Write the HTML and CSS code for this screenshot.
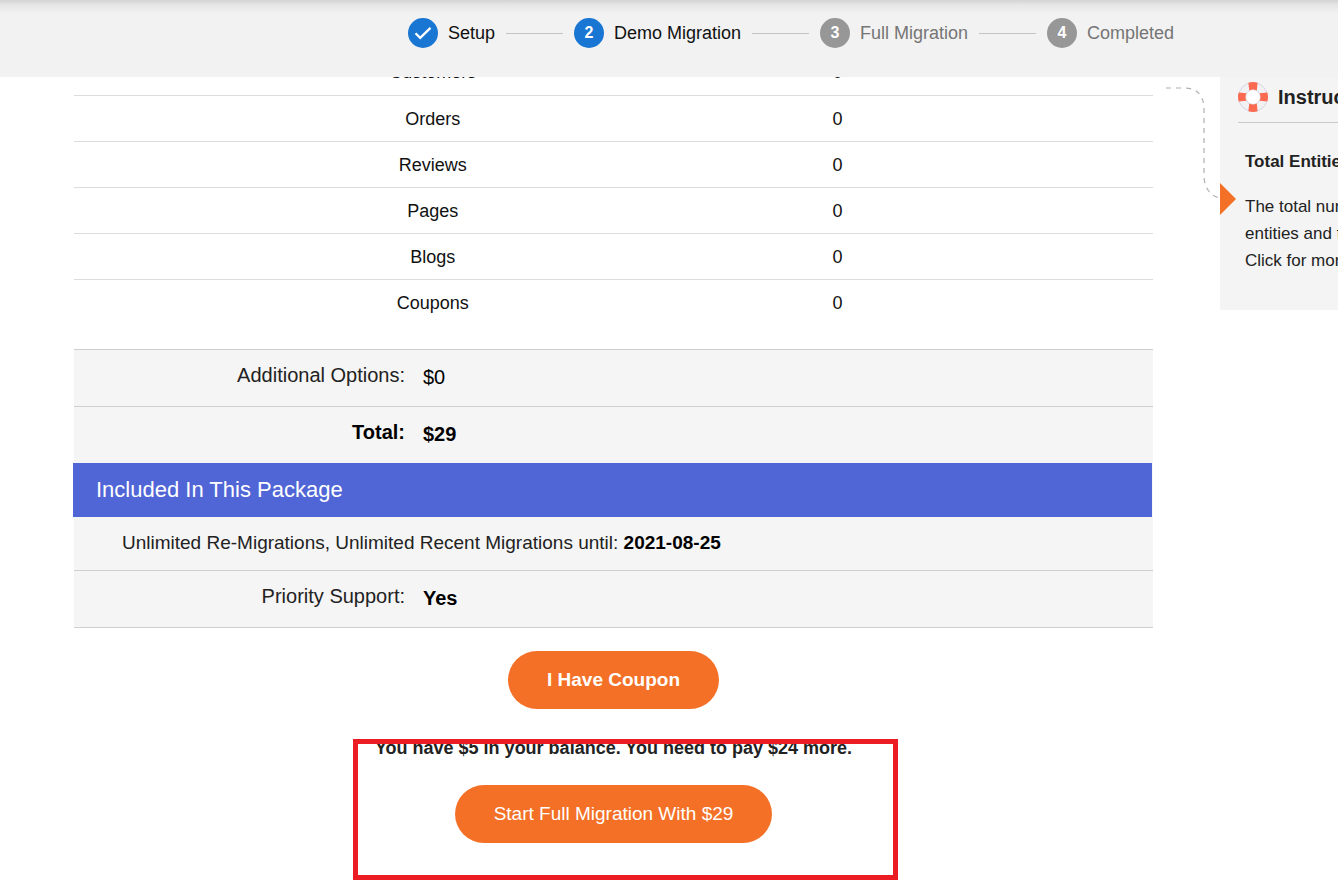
FILE: index.html
```html
<!DOCTYPE html>
<html lang="en">
<head>
<meta charset="utf-8">
<title>Demo Migration</title>
<link rel="stylesheet" href="styles.css">
</head>
<body>
<header class="topbar">
  <ol class="steps">
    <li class="step step-active">
      <span class="step-dot"><svg class="check" viewBox="0 0 18 14" aria-label="Done"><path d="M1.5 7.2 6.2 11.8 16.5 1.8" fill="none" stroke="#fff" stroke-width="2.3"/></svg></span>
      <span>Setup</span>
    </li>
    <li class="step-line"></li>
    <li class="step step-active"><span class="step-dot">2</span><span>Demo Migration</span></li>
    <li class="step-line"></li>
    <li class="step"><span class="step-dot">3</span><span>Full Migration</span></li>
    <li class="step-line"></li>
    <li class="step"><span class="step-dot">4</span><span>Completed</span></li>
  </ol>
</header>

<div class="layout">
  <main class="main">
    <table class="entities">
      <tbody>
        <tr><th scope="row">Customers</th><td>0</td></tr>
        <tr><th scope="row">Orders</th><td>0</td></tr>
        <tr><th scope="row">Reviews</th><td>0</td></tr>
        <tr><th scope="row">Pages</th><td>0</td></tr>
        <tr><th scope="row">Blogs</th><td>0</td></tr>
        <tr><th scope="row">Coupons</th><td>0</td></tr>
      </tbody>
    </table>

    <section class="summary">
      <div class="row"><span class="label">Additional Options:</span><span class="value">$0</span></div>
      <div class="row row-strong"><span class="label">Total:</span><span class="value">$29</span></div>
      <h2 class="banner">Included In This Package</h2>
      <p class="note">Unlimited Re-Migrations, Unlimited Recent Migrations until: <strong>2021-08-25</strong></p>
      <div class="row"><span class="label">Priority Support:</span><strong class="value">Yes</strong></div>
    </section>

    <div class="actions">
      <button class="btn btn-bold" type="button">I Have Coupon</button>
      <div class="payment">
        <p class="balance">You have $5 in your balance. You need to pay $24 more.</p>
        <button class="btn" type="button">Start Full Migration With $29</button>
        <div class="highlight"></div>
      </div>
    </div>
  </main>

  <aside class="sidebar">
    <svg class="connector" viewBox="0 0 72 136" aria-hidden="true">
      <path d="M2 8H20Q40 8 40 30V98Q42 115 56 118" fill="none" stroke="#b0b0b0" stroke-width="1.2" stroke-dasharray="5 5"/>
      <path d="M56 103 72 119 56 135Z" fill="#f37026"/>
    </svg>
    <h2 class="side-title">
      <svg class="buoy" viewBox="0 0 30 30" aria-hidden="true">
        <circle cx="15" cy="15" r="11" fill="none" stroke="#f2f2f5" stroke-width="7.4"/>
        <circle cx="15" cy="15" r="14.5" fill="none" stroke="#cdcdda" stroke-width=".8"/>
        <circle cx="15" cy="15" r="7.4" fill="#fff" stroke="#cdcdda" stroke-width=".8"/>
        <g fill="#fc6a51">
          <path d="M10.4 .7Q15-.7 19.6.7L18.8 8.4Q15 6.6 11.2 8.4Z"/>
          <path d="M10.4 29.3Q15 30.7 19.6 29.3L18.8 21.6Q15 23.4 11.2 21.6Z"/>
          <path d="M.7 10.4Q-.7 15 .7 19.6L8.4 18.8Q6.6 15 8.4 11.2Z"/>
          <path d="M29.3 10.4Q30.7 15 29.3 19.6L21.6 18.8Q23.4 15 21.6 11.2Z"/>
        </g>
      </svg>
      Instructions
    </h2>
    <div class="side-body">
      <h3 class="side-heading">Total Entities</h3>
      <p class="side-text">The total number<br>entities and their<br>Click for more</p>
    </div>
  </aside>
</div>
</body>
</html>
```
FILE: styles.css
```css
* { box-sizing: border-box; }

body {
  margin: 0;
  background: #fff;
  color: #111;
  font-family: "Liberation Sans", Arial, sans-serif;
  font-size: 18px;
}

h2, h3, p, ol { margin: 0; padding: 0; }

.topbar {
  position: fixed;
  top: 0;
  left: 0;
  right: 0;
  z-index: 5;
  padding: 18px 0 29px 244px;
  background: linear-gradient(#d4d4d4, #e6e6e6 5px, #f2f2f2 14px);
}

.steps {
  display: flex;
  justify-content: center;
  align-items: center;
  gap: 11px;
  list-style: none;
}

.step {
  display: flex;
  align-items: center;
  gap: 10px;
  color: #757575;
  white-space: nowrap;
}

.step-active { color: #111; }

.step-dot {
  display: flex;
  align-items: center;
  justify-content: center;
  width: 30px;
  height: 30px;
  border-radius: 50%;
  background: #979797;
  color: #fff;
  font-size: 16px;
  font-weight: bold;
}

.step-active .step-dot { background: #1976d2; }

.check { width: 18px; height: 14px; }

.step-line { width: 57px; height: 1px; background: #c4c4c4; }

.layout {
  display: flex;
  align-items: flex-start;
  gap: 67px;
  padding-left: 74px;
  overflow: hidden;
}

.main { flex: 1; padding-top: 49px; }

.entities {
  width: 100%;
  table-layout: fixed;
  border-collapse: collapse;
}

.entities th,
.entities td {
  height: 46px;
  padding: 2px 0 0;
  border-bottom: 1px solid #dcdcdc;
  font-weight: normal;
  text-align: center;
}

.entities th { width: 41.5%; padding-left: 25%; }

.entities tr:last-child > * { border-bottom: 0; }

.summary {
  margin-top: 24px;
  border-bottom: 1px solid #cfcfcf;
  background: #f5f5f5;
  color: #000;
  font-size: 20px;
  line-height: 24px;
}

.row {
  display: flex;
  gap: 18px;
  padding: 13px 0 17px;
  border-top: 1px solid #cfcfcf;
}

.label { width: 331px; color: #222; text-align: right; }

.value { padding-top: 2px; }

.row-strong { font-weight: bold; }
.row-strong .label { color: #000; }

.banner {
  margin: 0 1px 0 -1px;
  padding: 15px 23px;
  background: #5065d6;
  color: #fff;
  font-size: 22px;
  font-weight: normal;
}

.note { padding: 14px 48px 15px; color: #222; font-size: 19px; }
.note strong { color: #000; }

.actions {
  display: flex;
  flex-direction: column;
  align-items: center;
  gap: 30px;
  padding: 23px 0 4px;
}

.btn {
  padding: 17px 39px;
  border: 0;
  border-radius: 29px;
  background: #f37026;
  color: #fff;
  font-family: inherit;
  font-size: 19px;
  line-height: 24px;
}

.btn-bold { font-weight: bold; }

.payment {
  position: relative;
  display: flex;
  flex-direction: column;
  align-items: center;
  gap: 28px;
  padding-bottom: 37px;
}

.balance { font-weight: bold; line-height: 18px; color: #222; }

.highlight {
  position: absolute;
  inset: 0 -46px 0 -22px;
  border: 5px solid #eb1c24;
  pointer-events: none;
}

.sidebar {
  position: relative;
  flex: 0 0 320px;
  margin: 77px -202px 0 0;
  padding: 5px 18px 36px;
  background: #f4f4f4;
  color: #222;
}

.connector {
  position: absolute;
  top: 3px;
  left: -56px;
  width: 72px;
  height: 136px;
}

.side-title {
  display: flex;
  align-items: center;
  gap: 10px;
  padding-bottom: 10px;
  border-bottom: 1px solid #cacaca;
  font-size: 20px;
}

.buoy { width: 30px; height: 30px; }

.side-body { padding: 25px 7px 0; }

.side-heading { font-size: 17px; line-height: 27px; }

.side-text { margin-top: 18px; font-size: 17px; line-height: 27px; }
```
